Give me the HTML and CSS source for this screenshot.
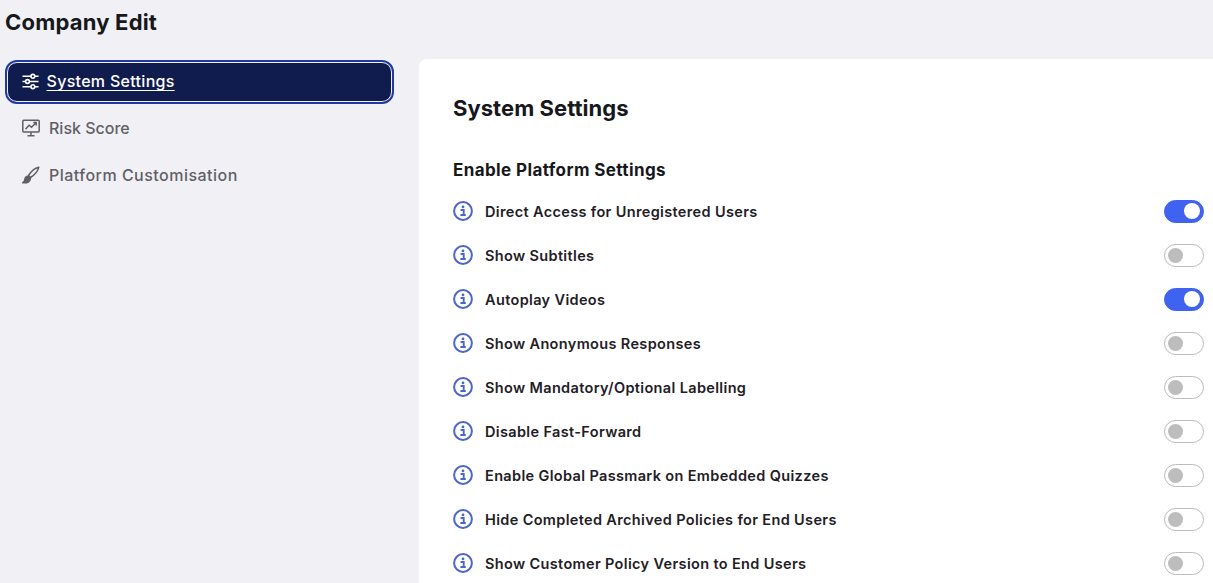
FILE: index.html
```html
<!DOCTYPE html>
<html lang="en">
<head>
<meta charset="utf-8">
<title>Company Edit</title>
<link rel="stylesheet" href="styles.css">
</head>
<body>
<header class="page-head"><h1 class="page-title">Company Edit</h1></header>
<div class="layout">
  <nav class="side">
    <a class="nav-item active">
      <svg class="nav-icon small" viewBox="0 0 18 18" fill="none" stroke="currentColor" stroke-width="1.700"><path d="M0.500 3.500h9M13.500 3.500h4M0.500 9h3M8 9h9.500M0.500 14.500h9M13.500 14.500h4"/><circle cx="11.500" cy="3.500" r="2"/><circle cx="5.800" cy="9" r="2"/><circle cx="11.500" cy="14.500" r="2"/></svg>
      <span>System Settings</span>
    </a>
    <a class="nav-item tight">
      <svg class="nav-icon" viewBox="0 0 18 18" fill="none" stroke="currentColor" stroke-width="1.500"><rect x="0.800" y="1.300" width="16.400" height="11.700" rx="1"/><path d="M3.500 10.200l3.500-4 2.500 2 4.500-4.500M5.500 16.700h7M9 13v3.700M11.300 3.500h2.900v2.900"/></svg>
      <span>Risk Score</span>
    </a>
    <a class="nav-item wide">
      <svg class="nav-icon" viewBox="0 0 18 18" fill="none" stroke="currentColor" stroke-width="1.500"><path d="M6.500 9.500C9 5.500 13 2 16.800 1.200 16 5 12.500 9 8.500 11.500z" stroke-linejoin="round"/><path d="M6.300 10c-2.300.2-3.300 1.700-3.500 3.500-.1 1.300-1 2.500-2 3.200 3 .4 6.400-.5 7.300-3 .4-1 .4-1.800.1-2.400z" fill="currentColor" stroke-linejoin="round"/></svg>
      <span>Platform Customisation</span>
    </a>
  </nav>
  <main class="card">
    <h2 class="card-title">System Settings</h2>
    <h3 class="section-title">Enable Platform Settings</h3>
    <ul class="rows">
      <li class="row"><svg class="info" viewBox="0 0 20 20"><use href="#i"/></svg><span class="label">Direct Access for Unregistered Users</span><span class="toggle on"></span></li>
      <li class="row"><svg class="info" viewBox="0 0 20 20"><use href="#i"/></svg><span class="label">Show Subtitles</span><span class="toggle"></span></li>
      <li class="row"><svg class="info" viewBox="0 0 20 20"><use href="#i"/></svg><span class="label">Autoplay Videos</span><span class="toggle on"></span></li>
      <li class="row"><svg class="info" viewBox="0 0 20 20"><use href="#i"/></svg><span class="label">Show Anonymous Responses</span><span class="toggle"></span></li>
      <li class="row"><svg class="info" viewBox="0 0 20 20"><use href="#i"/></svg><span class="label">Show Mandatory/Optional Labelling</span><span class="toggle"></span></li>
      <li class="row"><svg class="info" viewBox="0 0 20 20"><use href="#i"/></svg><span class="label">Disable Fast-Forward</span><span class="toggle"></span></li>
      <li class="row"><svg class="info" viewBox="0 0 20 20"><use href="#i"/></svg><span class="label">Enable Global Passmark on Embedded Quizzes</span><span class="toggle"></span></li>
      <li class="row"><svg class="info" viewBox="0 0 20 20"><use href="#i"/></svg><span class="label">Hide Completed Archived Policies for End Users</span><span class="toggle"></span></li>
      <li class="row"><svg class="info" viewBox="0 0 20 20"><use href="#i"/></svg><span class="label">Show Customer Policy Version to End Users</span><span class="toggle"></span></li>
    </ul>
  </main>
</div>
<svg class="defs" width="0" height="0"><defs><g id="i"><circle cx="10" cy="10" r="8.900" fill="none" stroke="#4a67c9" stroke-width="2"/><circle cx="10" cy="5.900" r="1.400" fill="#4a67c9"/><path d="M7.600 9h3.100v4.600M7.400 14h5.400" fill="none" stroke="#4a67c9" stroke-width="1.900"/></g></defs></svg>
</body>
</html>
```
FILE: styles.css
```css
* { box-sizing: border-box; }
html, body { height: 100%; }
body {
  margin: 0;
  background: #f0f0f5;
  font-family: Inter, "Liberation Sans", sans-serif;
  color: #17181c;
  overflow: hidden;
}
.defs { display: block; }
.page-head { height: 59px; padding: 8px 0 0 5px; }
.page-title { margin: 0; font-size: 22px; line-height: 28px; font-weight: 700; letter-spacing: 0.2px; }
.layout { display: flex; align-items: flex-start; }
.side { width: 419px; flex: none; padding: 3px 27px 0 7px; display: flex; flex-direction: column; gap: 3px; }
.nav-item {
  display: flex; align-items: center; gap: 9px;
  height: 44px; padding-left: 15px;
  font-size: 16px; font-weight: 500; color: #5f6066; letter-spacing: 0.25px;
}
.nav-item.tight { letter-spacing: 0; }
.nav-item.wide { letter-spacing: 0.48px; }
.nav-item.active {
  height: 40px;
  margin-bottom: 1px;
  padding: 0 0 2px 13.5px;
  gap: 8px;
  background: #111c4e;
  color: #fff;
  border: 1.5px solid #f0f0f5;
  border-radius: 10px;
  outline: 2px solid #1f3aa0;
  text-decoration: underline;
  text-underline-offset: 3px;
  letter-spacing: 0.3px;
}
.nav-icon { width: 18px; height: 18px; flex: none; }
.nav-icon.small { width: 17px; height: 17px; }
.card {
  flex: 1; min-width: 0; height: 530px;
  background: #fff; border-top-left-radius: 8px;
  padding: 34px 9px 0 34px;
}
.card-title { margin: 0; font-size: 22px; line-height: 30px; font-weight: 700; letter-spacing: 0.05px; }
.section-title { margin: 36px 0 0; font-size: 17px; line-height: 22px; font-weight: 700; letter-spacing: 0.4px; }
.rows { list-style: none; margin: 8px 0 0; padding: 0; }
.row { display: flex; align-items: center; height: 44px; }
.info { width: 20px; height: 20px; flex: none; }
.label { margin-left: 12px; padding-top: 1px; font-size: 14.5px; font-weight: 600; color: #1f2025; letter-spacing: 0.35px; }
.toggle {
  margin-left: auto; width: 40px; height: 23px; border-radius: 12px;
  border: 1px solid #bdbdbd; background: #fff;
  display: flex; align-items: center; padding-left: 3px;
}
.toggle::before {
  content: ""; width: 15px; height: 15px; border-radius: 50%; background: #bdbdbd;
}
.toggle.on { background: #3f63f0; border-color: #3f63f0; justify-content: flex-end; padding: 0 3px 0 0; }
.toggle.on::before { background: #fff; width: 16px; height: 16px; }
```
